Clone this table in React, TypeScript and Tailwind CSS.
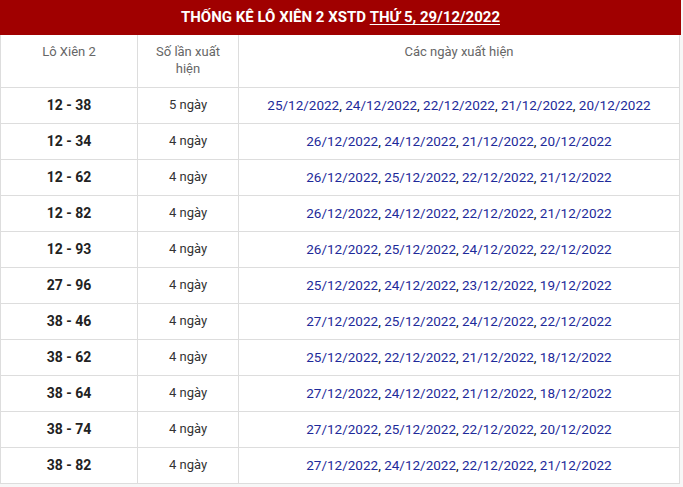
const rows: [string, string, string[]][] = [
  ['12 - 38', '5 ngày', ['25/12/2022', '24/12/2022', '22/12/2022', '21/12/2022', '20/12/2022']],
  ['12 - 34', '4 ngày', ['26/12/2022', '24/12/2022', '21/12/2022', '20/12/2022']],
  ['12 - 62', '4 ngày', ['26/12/2022', '25/12/2022', '22/12/2022', '21/12/2022']],
  ['12 - 82', '4 ngày', ['26/12/2022', '24/12/2022', '22/12/2022', '21/12/2022']],
  ['12 - 93', '4 ngày', ['26/12/2022', '25/12/2022', '24/12/2022', '22/12/2022']],
  ['27 - 96', '4 ngày', ['25/12/2022', '24/12/2022', '23/12/2022', '19/12/2022']],
  ['38 - 46', '4 ngày', ['27/12/2022', '25/12/2022', '24/12/2022', '22/12/2022']],
  ['38 - 62', '4 ngày', ['25/12/2022', '22/12/2022', '21/12/2022', '18/12/2022']],
  ['38 - 64', '4 ngày', ['27/12/2022', '24/12/2022', '21/12/2022', '18/12/2022']],
  ['38 - 74', '4 ngày', ['27/12/2022', '25/12/2022', '22/12/2022', '20/12/2022']],
  ['38 - 82', '4 ngày', ['27/12/2022', '24/12/2022', '22/12/2022', '21/12/2022']],
]

export default function App() {
  return (
    <div className="min-h-[487px] bg-[#f7f7f7] font-['Roboto',sans-serif]">
      <div className="w-[681px]">
        <div className="h-[35px] bg-[#a00000] flex items-center justify-center text-white text-[15px] font-bold">
          THỐNG KÊ LÔ XIÊN 2 XSTD&nbsp;<span className="underline underline-offset-2">THỨ 5, 29/12/2022</span>
        </div>
        <table className="w-[680px] border-collapse bg-white table-fixed">
          <colgroup>
            <col className="w-[137px]" />
            <col className="w-[101px]" />
            <col />
          </colgroup>
          <thead>
            <tr className="h-[52px] text-[13px] leading-[17px] text-[#666]">
              <th className="border border-[#ddd] border-t-0 font-normal align-top pt-[8px] px-2">Lô Xiên 2</th>
              <th className="border border-[#ddd] border-t-0 font-normal align-top pt-[8px] px-4">Số lần xuất hiện</th>
              <th className="border border-[#ddd] border-t-0 font-normal align-top pt-[8px]">Các ngày xuất hiện</th>
            </tr>
          </thead>
          <tbody>
            {rows.map(([pair, count, dates]) => (
              <tr key={pair} className="h-[36px]">
                <td className="border border-[#ddd] text-center text-[14px] font-bold text-[#222]">{pair}</td>
                <td className="border border-[#ddd] text-center text-[13px] text-[#333]">{count}</td>
                <td className="border border-[#ddd] text-center text-[13.5px] text-[#111]">
                  {dates.map((d, i) => (
                    <span key={d}>
                      <span className="text-[#1e2a9a]">{d}</span>
                      {i < dates.length - 1 && ', '}
                    </span>
                  ))}
                </td>
              </tr>
            ))}
          </tbody>
        </table>
      </div>
    </div>
  )
}
